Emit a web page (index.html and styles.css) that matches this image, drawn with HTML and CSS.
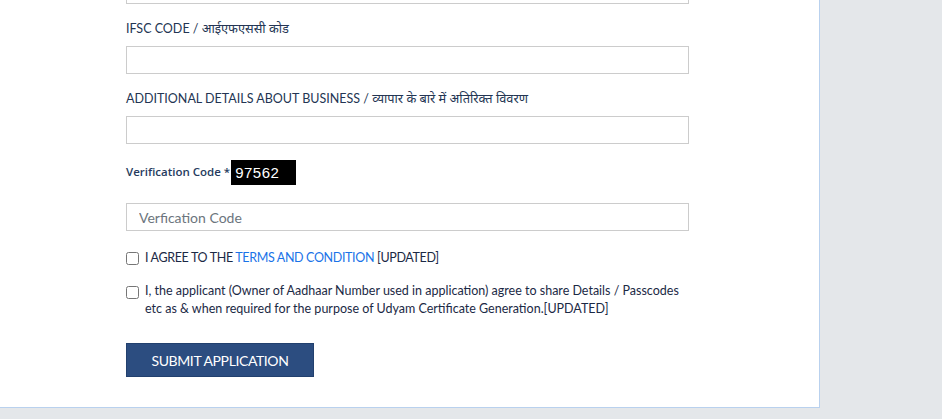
FILE: index.html
```html
<!DOCTYPE html>
<html lang="en">
<head>
<meta charset="utf-8">
<title>Udyam Registration</title>
<link rel="stylesheet" href="styles.css">
</head>
<body>
<div class="page">
  <div class="panel">
    <div class="form">
      <div class="input stub"></div>

      <label class="label">IFSC CODE / <span class="hi">आईएफएससी कोड</span></label>
      <input class="input" type="text">

      <label class="label">ADDITIONAL DETAILS ABOUT BUSINESS / <span class="hi">व्यापार के बारे में अतिरिक्त विवरण</span></label>
      <input class="input" type="text">

      <div class="captcha-row">
        <span class="label-strong">Verification Code *</span>
        <span class="captcha">97562</span>
      </div>
      <input class="input code" type="text" placeholder="Verfication Code">

      <div class="check check-first">
        <input type="checkbox" class="box">
        <span class="check-text caps">I AGREE TO THE <a class="link" href="#">TERMS AND CONDITION</a> [UPDATED]</span>
      </div>

      <div class="check check-second">
        <input type="checkbox" class="box">
        <span class="check-text">I, the applicant (Owner of Aadhaar Number used in application) agree to share Details / Passcodes etc as &amp; when required for the purpose of Udyam Certificate Generation.[UPDATED]</span>
      </div>

      <button class="submit" type="button">SUBMIT APPLICATION</button>
    </div>
  </div>
</div>
</body>
</html>
```

FILE: styles.css
```css
* { box-sizing: border-box; }
html, body {
  margin: 0;
  padding: 0;
  background: #e4e7ea;
  height: 100%;
}
body {
  font-family: Lato, "Noto Sans", "Noto Sans Devanagari", sans-serif;
  font-size: 12.5px;
  color: #1f2d47;
}
.page {
  width: 942px;
}
.panel {
  width: 820px;
  background: #ffffff;
  border-right: 1px solid #b9d1ee;
  border-bottom: 1px solid #b9d1ee;
  padding: 0 0 30px 126px;
}
.form {
  width: 563px;
  display: flex;
  flex-direction: column;
  align-items: flex-start;
}
.input {
  display: block;
  width: 563px;
  height: 28px;
  border: 1px solid #cccccc;
  border-radius: 0;
  background: #fff;
  padding: 0 12px;
  font-family: inherit;
  font-size: 14px;
  color: #495057;
  margin: 0;
  outline: none;
}
.stub {
  height: 4px;
  border-top: none;
}
.input::placeholder {
  color: #6c757d;
}
.label {
  display: block;
  height: 18px;
  line-height: 18px;
  margin-top: 16px;
  margin-bottom: 8px;
  color: #233553;
  font-size: 12.5px;
  overflow: visible;
}
.hi {
  font-size: 12.8px;
  line-height: 1;
  font-weight: normal;
}
.captcha-row {
  margin-top: 16px;
  height: 25px;
  display: flex;
  align-items: center;
  gap: 1px;
}
.label-strong {
  font-weight: 600;
  color: #263b5e;
  font-family: "Open Sans", Lato, sans-serif;
  font-size: 11.5px;
  position: relative;
  top: -1px;
}
.captcha {
  width: 65px;
  height: 25px;
  background: #000;
  color: #fff;
  font-family: "Liberation Sans", Arial, sans-serif;
  font-size: 15px;
  letter-spacing: 0.5px;
  line-height: 26px;
  padding-left: 4px;
}
.code {
  margin-top: 18px;
}
.check {
  display: flex;
  align-items: flex-start;
  gap: 6px;
  line-height: 18px;
  color: #1b2945;
}
.caps {
  letter-spacing: -0.35px;
}
.check-first { margin-top: 18px; }
.check-second { margin-top: 15px; width: 560px; }
.box {
  width: 13px;
  height: 13px;
  margin: 3px 0 0 0;
  flex: none;
}
.check-second .box { margin-top: 4px; }
.link {
  color: #1a73e8;
  text-decoration: none;
}
.submit {
  margin-top: 25px;
  width: 188px;
  height: 34px;
  background: #2c4d80;
  border: 1px solid #22406e;
  color: #ffffff;
  font-family: inherit;
  font-size: 14px;
  letter-spacing: -0.4px;
  padding: 0;
  border-radius: 0;
}
```
